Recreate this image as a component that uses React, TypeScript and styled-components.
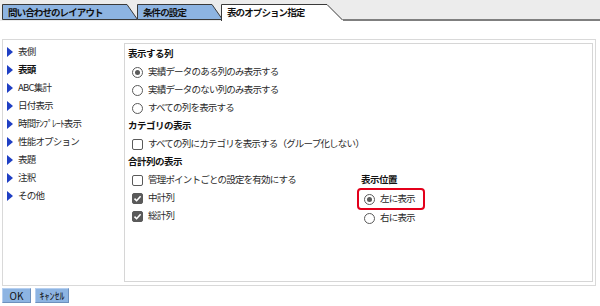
import styled, { createGlobalStyle } from "styled-components";

const GlobalStyle = createGlobalStyle`
  html, body {
    margin: 0;
    padding: 0;
    background: #fff;
  }
  body {
    font-family: "Noto Sans CJK JP", "Noto Sans", sans-serif;
    font-size: 9.5px;
    letter-spacing: -0.8px;
    color: #1e1e1e;
  }
`;

const TabBar = styled.div`
  display: flex;
  align-items: flex-end;
  height: 21px;
  padding: 3px 0 0 2px;
  box-sizing: border-box;
  background: #ececec;
`;

type TabProps = {
  $w: number;
  $shift: number;
  $z: number;
};

const TabItem = styled.div<TabProps>`
  position: relative;
  width: ${({ $w }) => $w}px;
  height: 17px;
  margin-left: ${({ $shift }) => $shift}px;
  z-index: ${({ $z }) => $z};
  display: flex;
  align-items: center;
  padding: 1px 0 0 6px;
  box-sizing: border-box;
  font-weight: bold;
  letter-spacing: -0.9px;
  color: #111;
  line-height: 1;
`;

const TabShape = styled.svg`
  position: absolute;
  inset: 0;
`;

const TabLabel = styled.span`
  position: relative;
`;

const TabLine = styled.div`
  flex: 1;
  height: 2px;
  background: #7f7f7f;
`;

function Tab({
  label,
  width,
  shift,
  z,
  active = false,
}: {
  label: string;
  width: number;
  shift: number;
  z: number;
  active?: boolean;
}) {
  const h = 17;
  const slope = active ? 16 : 11;
  return (
    <TabItem $w={width} $shift={shift} $z={z}>
      <TabShape width={width} height={h}>
        {active ? (
          <>
            <polygon
              points={`0,${h} 0,0 ${width - slope},0 ${width},${h}`}
              fill="#fff"
            />
            <polyline
              points={`0.5,${h} 0.5,0.5 ${width - slope},0.5 ${width - 0.5},${h - 1}`}
              fill="none"
              stroke="#3a3a3a"
            />
          </>
        ) : (
          <polygon
            points={`0.5,${h - 1.5} 0.5,0.5 ${width - slope},0.5 ${width - 0.5},${h - 1.5}`}
            fill="#8db4e2"
            stroke="#3a3a3a"
          />
        )}
      </TabShape>
      <TabLabel>{label}</TabLabel>
    </TabItem>
  );
}

const Frame = styled.div`
  display: flex;
  margin: 18px 4px 0 2px;
  height: 247px;
  border: 1px solid #d9d9d9;
  box-sizing: border-box;
`;

const Nav = styled.ul`
  list-style: none;
  margin: 0;
  padding: 3px 0 0 4px;
  width: 121px;
  box-sizing: border-box;
`;

const NavItem = styled.li<{ $bold?: boolean }>`
  display: flex;
  align-items: center;
  gap: 5px;
  height: 18px;
  line-height: 1;
  font-weight: ${({ $bold }) => ($bold ? "bold" : "normal")};
  color: ${({ $bold }) => ($bold ? "#111" : "#2a2a2a")};
`;

const Arrow = styled.svg`
  flex: none;
`;

const Panel = styled.div`
  flex: 1;
  margin: 3px 2px 3px 0;
  padding: 1px 0 0 3px;
  border: 1px solid #d6d6d6;
  box-sizing: border-box;
`;

const Heading = styled.div<{ $indent?: number }>`
  display: flex;
  align-items: center;
  height: 18px;
  padding-left: ${({ $indent = 0 }) => $indent}px;
  font-weight: bold;
  letter-spacing: -0.5px;
  color: #111;
  line-height: 1;
`;

const Option = styled.div<{ $indent?: number; $h?: number }>`
  display: flex;
  align-items: center;
  gap: 5px;
  height: ${({ $h = 18 }) => $h}px;
  padding-left: ${({ $indent = 4 }) => $indent}px;
  box-sizing: border-box;
  color: #2a2a2a;
  line-height: 1;
`;

const RadioMark = styled.span<{ $on?: boolean }>`
  flex: none;
  width: 11px;
  height: 11px;
  border: 1px solid #5a5a5a;
  border-radius: 50%;
  box-sizing: border-box;
  background: #fff;
  display: flex;
  align-items: center;
  justify-content: center;
  &::after {
    content: "";
    width: 5px;
    height: 5px;
    border-radius: 50%;
    background: ${({ $on }) => ($on ? "#5a5a5a" : "transparent")};
  }
`;

const CheckMark = styled.span<{ $on?: boolean }>`
  flex: none;
  width: 11px;
  height: 11px;
  border: 1px solid #5a5a5a;
  border-radius: 2px;
  box-sizing: border-box;
  background: ${({ $on }) => ($on ? "#5a5a5a" : "#fff")};
  display: flex;
  align-items: center;
  justify-content: center;
`;

const Columns = styled.div`
  display: flex;
`;

const LeftCol = styled.div`
  width: 229px;
`;

const RightCol = styled.div`
  display: flex;
  flex-direction: column;
`;

const Highlight = styled.div`
  width: 68px;
  height: 22px;
  margin-top: -1px;
  border: 2px solid #e3001b;
  border-radius: 4px;
  box-sizing: border-box;
  display: flex;
`;

const ButtonRow = styled.div`
  display: flex;
  gap: 4px;
  margin-top: 2px;
  padding-left: 2px;
`;

const Button = styled.button<{ $w: number }>`
  width: ${({ $w }) => $w}px;
  height: 15px;
  padding: 0;
  background: #8db4e2;
  border: 1px solid #6d90bd;
  border-top-color: #b5cff0;
  border-left-color: #b5cff0;
  font-family: inherit;
  font-size: 10px;
  letter-spacing: 0;
  color: #111;
  line-height: 1;
`;

function Radio({ on, children }: { on?: boolean; children: React.ReactNode }) {
  return (
    <>
      <RadioMark $on={on} />
      <span>{children}</span>
    </>
  );
}

function Check({ on, children }: { on?: boolean; children: React.ReactNode }) {
  return (
    <>
      <CheckMark $on={on}>
        {on && (
          <svg width="9" height="9" viewBox="0 0 9 9">
            <polyline
              points="1.5,4.6 3.6,6.7 7.6,2.2"
              fill="none"
              stroke="#fff"
              strokeWidth="1.6"
            />
          </svg>
        )}
      </CheckMark>
      <span>{children}</span>
    </>
  );
}

const navItems = [
  { label: "表側" },
  { label: "表頭", bold: true },
  { label: "ABC集計" },
  { label: "日付表示" },
  { label: "時間ﾃﾝﾌﾟﾚｰﾄ表示" },
  { label: "性能オプション" },
  { label: "表題" },
  { label: "注釈" },
  { label: "その他" },
];

export default function App() {
  return (
    <>
      <GlobalStyle />
      <TabBar>
        <Tab label="問い合わせのレイアウト" width={136} shift={0} z={1} />
        <Tab label="条件の設定" width={86} shift={-1} z={2} />
        <Tab label="表のオプション指定" width={122} shift={-2} z={3} active />
        <TabLine />
      </TabBar>

      <Frame>
        <Nav>
          {navItems.map((item) => (
            <NavItem key={item.label} $bold={item.bold}>
              <Arrow width="6" height="10" viewBox="0 0 6 10">
                <polygon points="0,0 6,5 0,10" fill="#1f3fc4" />
              </Arrow>
              {item.label}
            </NavItem>
          ))}
        </Nav>

        <Panel>
          <Heading>表示する列</Heading>
          <Option>
            <Radio on>実績データのある列のみ表示する</Radio>
          </Option>
          <Option>
            <Radio>実績データのない列のみ表示する</Radio>
          </Option>
          <Option>
            <Radio>すべての列を表示する</Radio>
          </Option>

          <Heading>カテゴリの表示</Heading>
          <Option>
            <Check>すべての列にカテゴリを表示する（グループ化しない）</Check>
          </Option>

          <Heading>合計列の表示</Heading>
          <Columns>
            <LeftCol>
              <Option>
                <Check>管理ポイントごとの設定を有効にする</Check>
              </Option>
              <Option>
                <Check on>中計列</Check>
              </Option>
              <Option>
                <Check on>総計列</Check>
              </Option>
            </LeftCol>
            <RightCol>
              <Heading $indent={4}>表示位置</Heading>
              <Highlight>
                <Option $indent={5} $h={18}>
                  <Radio on>左に表示</Radio>
                </Option>
              </Highlight>
              <Option $indent={7} $h={16}>
                <Radio>右に表示</Radio>
              </Option>
            </RightCol>
          </Columns>
        </Panel>
      </Frame>

      <ButtonRow>
        <Button $w={29}>OK</Button>
        <Button $w={34}>ｷｬﾝｾﾙ</Button>
      </ButtonRow>
    </>
  );
}
